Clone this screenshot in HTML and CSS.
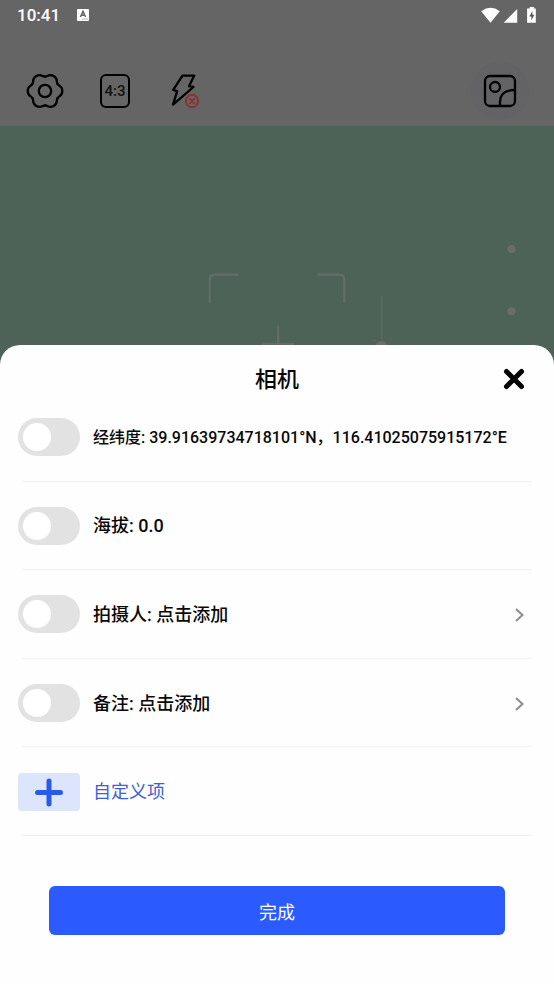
FILE: index.html
```html
<!DOCTYPE html>
<html lang="zh-CN">
<head>
<meta charset="utf-8">
<meta name="viewport" content="width=device-width, initial-scale=1">
<title>相机</title>
<link rel="stylesheet" href="styles.css">
</head>
<body>
<header class="top">
  <div class="status">
    <span class="time">10:41</span>
    <svg class="input-icon" width="14" height="14" viewBox="0 0 14 14">
      <rect x="1" y="1" width="12" height="12" rx="1" fill="#fff"/>
      <path d="M4.4 9 7 3.4 9.6 9M5.4 7.2h3.2" fill="none" stroke="#656565" stroke-width="1.5"/>
      <path d="M6.5 11h1M8.5 11h1M10.5 11h1" stroke="#656565"/>
    </svg>
    <svg class="signals" width="56" height="18" viewBox="0 0 56 18" fill="#fff">
      <path d="M.2 5.200Q9.500 -1.600 18.800 5.200L9.500 16.800Z"/>
      <path d="M36.200 3v13.700H22.700Z"/>
      <path d="M48.700 1h4.200v1.600h1.900v14.100h-8.700V2.600h2.600z"/>
      <path d="M51.400 5 48.300 10.400h2.100v3.900l3-5.600h-2z" fill="#555"/>
    </svg>
  </div>
  <nav class="tools">
    <button class="tool" aria-label="设置">
      <svg width="40" height="40" viewBox="-20 -20 40 40" class="line">
        <path id="lobe" d="M12.500-7.200C14.200-4.300 17.300-5.500 17.300 0C17.300 5.500 14.200 4.300 12.500 7.200"/>
        <use href="#lobe" transform="rotate(60)"/>
        <use href="#lobe" transform="rotate(120)"/>
        <use href="#lobe" transform="rotate(180)"/>
        <use href="#lobe" transform="rotate(240)"/>
        <use href="#lobe" transform="rotate(300)"/>
        <circle r="6.200"/>
      </svg>
    </button>
    <button class="tool"><span class="ratio">4:3</span></button>
    <button class="tool" aria-label="闪光灯">
      <svg width="40" height="40" viewBox="165 71 40 40" class="line">
        <path d="M182.500 75.600H194.300L189 86.200 193.500 87 173 104.600 177.200 91.200 173.200 89.900Z"/>
        <circle cx="192" cy="101" r="7.200" fill="#656565" stroke="none"/>
        <g stroke="#8d3232" stroke-width="2"><circle cx="192" cy="101" r="6.200"/><path d="M189.800 98.800l4.400 4.400M194.200 98.800l-4.400 4.400"/></g>
      </svg>
    </button>
    <button class="tool gallery" aria-label="相册">
      <svg width="36" height="36" viewBox="0 0 36 36" class="line">
        <rect x="3" y="3" width="30" height="30" rx="5"/>
        <circle cx="13" cy="14" r="5"/>
        <path d="M18 33V29Q18 17 33 17"/>
      </svg>
    </button>
  </nav>
</header>
<div class="preview">
  <svg class="viewfinder" viewBox="0 0 554 238" preserveAspectRatio="xMidYMin slice" fill="none" stroke="#646d67" stroke-width="2">
    <path d="M210 176V153Q210 148 215 148H239M317 148H339Q344 148 344 153V176"/>
    <path d="M278 199V220M262 217H294"/>
    <path d="M381.500 169V213" stroke-width="1"/>
    <path d="M373 213l2 1M391 212l-2 1" stroke-width="1"/>
    <g fill="#6a6e6b" stroke="none"><circle cx="381" cy="220" r="6"/><circle cx="510.500" cy="122.500" r="4"/><circle cx="510.500" cy="184.500" r="4"/></g>
  </svg>
</div>
<main class="sheet">
  <div class="sheet-head">
    <h1>相机</h1>
    <button class="close" aria-label="关闭">
      <svg width="24" height="24" viewBox="0 0 24 24"><path d="M4.500 4.500 19.500 19.500M19.500 4.500 4.500 19.500" stroke="#000" stroke-width="5" stroke-linecap="round"/></svg>
    </button>
  </div>
  <ul class="options">
    <li><label class="row"><input class="switch" type="checkbox"><span class="text small">经纬度: 39.91639734718101°N，116.41025075915172°E</span></label></li>
    <li><label class="row"><input class="switch" type="checkbox"><span class="text">海拔: 0.0</span></label></li>
    <li><div class="row"><input class="switch" type="checkbox" aria-label="拍摄人"><button class="text link">拍摄人: 点击添加<svg width="12" height="16" viewBox="0 0 12 16"><path d="M2 2 8.500 8 2 14"/></svg></button></div></li>
    <li><div class="row"><input class="switch" type="checkbox" aria-label="备注"><button class="text link">备注: 点击添加<svg width="12" height="16" viewBox="0 0 12 16"><path d="M2 2 8.500 8 2 14"/></svg></button></div></li>
    <li><button class="row custom"><span class="plus"><svg width="30" height="30" viewBox="0 0 30 30"><path d="M15 4V27M3.500 15.500H26.500" stroke="#2b59e8" stroke-width="5" stroke-linecap="round"/></svg></span><span class="text">自定义项</span></button></li>
  </ul>
  <footer class="actions"><button class="done">完成</button></footer>
</main>
</body>
</html>
```

FILE: styles.css
```css
* {
  box-sizing: border-box;
}

body {
  margin: 0;
  min-height: 100vh;
  display: flex;
  flex-direction: column;
  background: #fefefe;
  color: #080808;
  font-family: Roboto, "Noto Sans CJK SC", sans-serif;
}

button {
  margin: 0;
  padding: 0;
  border: 0;
  background: none;
  color: inherit;
  font: inherit;
}

svg {
  display: block;
}

.top {
  background: #656565;
}

.status {
  display: flex;
  align-items: center;
  height: 30px;
  padding: 0 17px;
  color: #fff;
}

.time {
  font-size: 17px;
  font-weight: 500;
  line-height: 30px;
}

.input-icon {
  margin-left: 16px;
}

.signals {
  margin-left: auto;
}

.tools {
  display: flex;
  align-items: center;
  gap: 30px;
  padding: 32px 25px 6px;
}

.tool {
  display: flex;
  align-items: center;
  justify-content: center;
  width: 40px;
  height: 40px;
}

.line {
  fill: none;
  stroke: #000;
  stroke-width: 2.3;
  stroke-linecap: round;
  stroke-linejoin: round;
}

.ratio {
  width: 30px;
  height: 34px;
  border: 2px solid #000;
  border-radius: 6px;
  color: #111;
  font-size: 15px;
  font-weight: 500;
  line-height: 30px;
}

.gallery {
  width: 58px;
  height: 58px;
  margin-left: auto;
  border-radius: 50%;
  background: #636365;
}

.preview {
  height: 239px;
  background: #4d6358;
}

.viewfinder {
  width: 100%;
  height: 100%;
}

.sheet {
  flex: 1;
  display: flex;
  flex-direction: column;
  margin-top: -20px;
  border-radius: 20px 20px 0 0;
  background: #fefefe;
}

.sheet-head {
  display: grid;
  grid-template-columns: 1fr auto 1fr;
  align-items: center;
  padding: 20px 28px 0;
}

h1 {
  grid-column: 2;
  margin: 0;
  padding-top: 2px;
  font-size: 22px;
  font-weight: 500;
  line-height: 26px;
}

.close {
  justify-self: end;
}

.options {
  flex: 1;
  display: flex;
  flex-direction: column;
  margin: 0;
  padding: 0;
  list-style: none;
}

.options li {
  flex: 1;
  display: flex;
  flex-direction: column;
}

.options li::after {
  content: "";
  height: 1px;
  margin: 0 22px;
  background: #f2f2f2;
}

.row {
  flex: 1;
  display: flex;
  align-items: center;
  gap: 13px;
  padding: 1px 28px 0 18px;
}

.switch {
  appearance: none;
  flex: none;
  display: flex;
  align-items: center;
  width: 62px;
  height: 38px;
  margin: 0;
  padding: 5px;
  border-radius: 19px;
  background: #e2e2e2;
}

.switch::before {
  content: "";
  width: 28px;
  height: 28px;
  border-radius: 50%;
  background: #fff;
}

.switch:checked {
  justify-content: flex-end;
  background: #2b5bff;
}

.text {
  padding-top: 1px;
  font-size: 18px;
  font-weight: 500;
  line-height: 28px;
}

.small {
  font-size: 16px;
  white-space: nowrap;
}

.link {
  flex: 1;
  display: flex;
  align-items: center;
  justify-content: space-between;
}

.link path {
  fill: none;
  stroke: #8c8c8c;
  stroke-width: 2;
}

.custom {
  color: #3b60d8;
}

.custom .text {
  font-weight: 400;
}

.plus {
  display: flex;
  align-items: center;
  justify-content: center;
  width: 62px;
  height: 38px;
  border-radius: 4px;
  background: #dce5fb;
}

.actions {
  padding: 50px 49px 49px;
}

.done {
  width: 100%;
  height: 49px;
  border-radius: 6px;
  background: #2b5bff;
  color: #fff;
  font-size: 18px;
}
```
